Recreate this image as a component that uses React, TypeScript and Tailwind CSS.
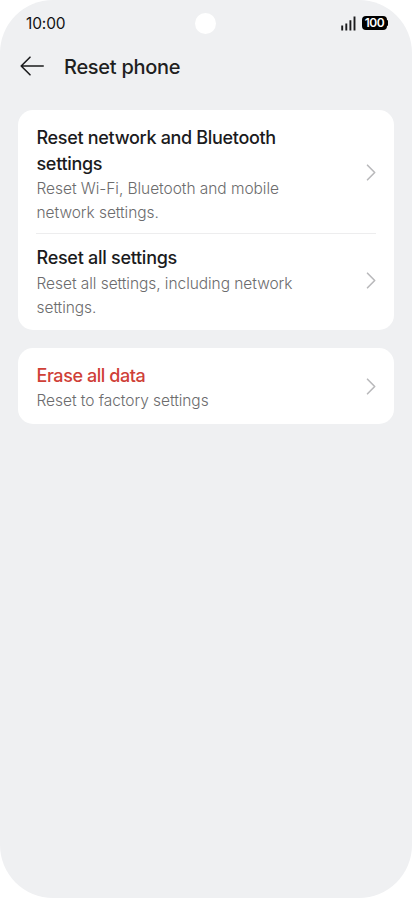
import React from "react";

// ======= App =======
const App = () => {
  return (
    <div className="w-[412px] h-[898px] bg-white font-['Inter',sans-serif]">
      <main className="flex h-full w-full flex-col rounded-[53px] bg-[#eff0f2]">
        <StatusBar />

        <header className="flex h-10 items-center gap-5 pl-5">
          <BackIcon />
          <h1 className="text-[20px] font-medium leading-10 tracking-[-0.28px] text-[#1f1f21]">
            Reset phone
          </h1>
        </header>

        <div className="mt-[23.5px] flex flex-col gap-[18.4px] pl-[18px] pr-[18.5px]">
          <Card>
            <Row className="h-[123px] pt-[15px]" chevronClassName="mt-[38.5px]">
              <Title className="tracking-[-0.32px] text-[#1b1b1d]">
                Reset network and Bluetooth
                <br />
                settings
              </Title>
              <Description>
                Reset Wi-Fi, Bluetooth and mobile
                <br />
                network settings.
              </Description>
            </Row>
            <div className="mx-[18px] h-px bg-[#ededee]" />
            <Row className="h-24 pt-[11px]" chevronClassName="mt-[27px]">
              <Title className="mb-px tracking-[-0.28px] text-[#1b1b1d]">Reset all settings</Title>
              <Description>
                Reset all settings, including network
                <br />
                settings.
              </Description>
            </Row>
          </Card>

          <Card>
            <Row className="h-[76px] pt-[15px]" chevronClassName="mt-[15px]">
              <Title className="tracking-[-0.44px] text-[#cf4037]">Erase all data</Title>
              <Description>Reset to factory settings</Description>
            </Row>
          </Card>
        </div>
      </main>
    </div>
  );
};

export default App;

// ======= Status bar =======
const StatusBar = () => {
  return (
    <div className="grid h-[46.5px] grid-cols-[1fr_21px_1fr] items-center pl-[23px] pr-6">
      <span className="pl-[3px] text-[15.5px] font-normal leading-none tracking-[-0.12px] text-[#111113]">
        10:00
      </span>
      <span className="h-[21px] w-[21px] rounded-full bg-white" />
      <div className="flex items-center justify-end gap-1.5">
        <SignalIcon />
        <Battery />
      </div>
    </div>
  );
};

const Battery = () => {
  return (
    <div className="flex items-center">
      <span className="flex h-[14px] w-[25px] items-center justify-center rounded-[4px] bg-black text-[12px] font-semibold leading-none tracking-[-0.4px] text-white">
        100
      </span>
      <span className="h-1.5 w-px rounded-r-full bg-black" />
    </div>
  );
};

// ======= Card =======
interface BoxProps {
  children?: React.ReactNode;
  className?: string;
}

const Card: React.FC<BoxProps> = ({ children }) => {
  return <section className="overflow-hidden rounded-[15px] bg-white">{children}</section>;
};

interface RowProps extends BoxProps {
  chevronClassName: string;
}

const Row: React.FC<RowProps> = ({ children, className, chevronClassName }) => {
  return (
    <div className={`flex items-start justify-between pl-[18.5px] pr-[18px] ${className}`}>
      <div className="whitespace-nowrap">{children}</div>
      <ChevronIcon className={chevronClassName} />
    </div>
  );
};

const Title: React.FC<BoxProps> = ({ children, className }) => {
  return <h2 className={`text-[18px] font-medium leading-[26px] ${className}`}>{children}</h2>;
};

const Description: React.FC<BoxProps> = ({ children }) => {
  return (
    <p className="text-[15.5px] font-light leading-6 tracking-[-0.05px] text-[#6c6c6d]">{children}</p>
  );
};

// ======= Icons =======
const BackIcon = () => {
  return (
    <svg
      width="24"
      height="20"
      viewBox="0 0 24 20"
      fill="none"
      stroke="#1b1b1d"
      strokeWidth={1.6}
      className="mb-px"
    >
      <path strokeLinecap="round" strokeLinejoin="round" d="M23.2 10H1.2M10 1.2 1.2 10 10 18.8" />
    </svg>
  );
};

const SignalIcon = () => {
  return (
    <svg width="15" height="15" viewBox="0 0 15 15" stroke="#1b1b1d" strokeWidth={1.9}>
      <path d="M1.2 9.6v4.9M5.3 7.5v7M9.4 4.2v10.3M13.5 0.6v13.9" />
    </svg>
  );
};

const ChevronIcon: React.FC<{ className: string }> = ({ className }) => {
  return (
    <svg
      width="10"
      height="17"
      viewBox="0 0 10 17"
      fill="none"
      stroke="#b9b9bb"
      strokeWidth={1.6}
      className={className}
    >
      <path strokeLinecap="round" strokeLinejoin="round" d="M1.5 1.2 8.7 8.5 1.5 15.8" />
    </svg>
  );
};
